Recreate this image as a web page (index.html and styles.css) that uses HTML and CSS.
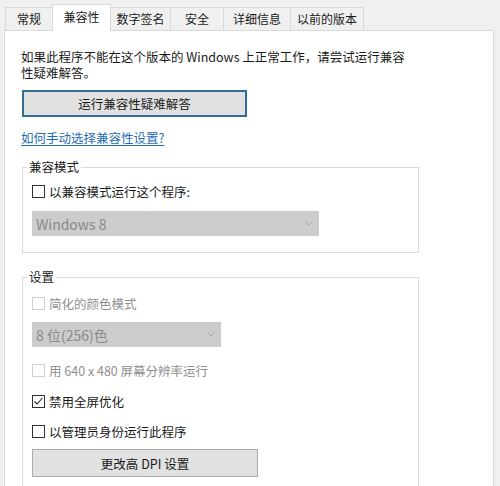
FILE: index.html
```html
<!DOCTYPE html>
<html lang="zh-CN">
<head>
<meta charset="utf-8">
<title>兼容性</title>
<link rel="stylesheet" href="styles.css">
</head>
<body>
<div class="window">
  <div class="tabs">
    <div class="tab tab-general">常规</div>
    <div class="tab tab-active">兼容性</div>
    <div class="tab tab-sign">数字签名</div>
    <div class="tab tab-security">安全</div>
    <div class="tab tab-details">详细信息</div>
    <div class="tab tab-prev">以前的版本</div>
  </div>
  <div class="panel">
    <p class="intro">如果此程序不能在这个版本的 Windows 上正常工作，请尝试运行兼容性疑难解答。</p>
    <button class="btn btn-focus">运行兼容性疑难解答</button>
    <a class="link">如何手动选择兼容性设置?</a>

    <fieldset class="group group-compat">
      <legend>兼容模式</legend>
      <div class="check check-first"><span class="box"></span><span>以兼容模式运行这个程序:</span></div>
      <div class="select select-os">
        <span>Windows 8</span>
        <svg class="chev" width="8" height="5" viewBox="0 0 8 5"><polyline points="0.5,0.5 4,4 7.5,0.5" fill="none" stroke="#a8a8a8" stroke-width="1"/></svg>
      </div>
    </fieldset>

    <fieldset class="group group-settings">
      <legend>设置</legend>
      <div class="check check-disabled check-s1"><span class="box"></span><span>简化的颜色模式</span></div>
      <div class="select select-color">
        <span>8 位(256)色</span>
        <svg class="chev" width="8" height="5" viewBox="0 0 8 5"><polyline points="0.5,0.5 4,4 7.5,0.5" fill="none" stroke="#a8a8a8" stroke-width="1"/></svg>
      </div>
      <div class="check check-disabled check-s2"><span class="box"></span><span>用 640 x 480 屏幕分辨率运行</span></div>
      <div class="check check-s3"><span class="box"><svg width="11" height="11" viewBox="0 0 11 11"><polyline points="1.5,5.5 4,8 9.5,2" fill="none" stroke="#222" stroke-width="1.1"/></svg></span><span>禁用全屏优化</span></div>
      <div class="check check-s4"><span class="box"></span><span>以管理员身份运行此程序</span></div>
      <button class="btn btn-dpi">更改高 DPI 设置</button>
    </fieldset>
  </div>
</div>
</body>
</html>
```

FILE: styles.css
```css
html, body {
  margin: 0;
  height: 100%;
}
body {
  background: #f0f0f0;
  font-family: "Noto Sans CJK SC", "Noto Sans", sans-serif;
  font-size: 12.5px;
  color: #1a1a1a;
  overflow: hidden;
}
.window {
  display: flex;
  flex-direction: column;
  height: 486px;
  padding: 0 6px 0 4px;
  box-sizing: border-box;
  overflow: hidden;
}
.tabs {
  flex: none;
  display: flex;
  align-items: flex-end;
  height: 31px;
  margin-bottom: -1px;
  padding-left: 1px;
  position: relative;
  z-index: 1;
}
.tab {
  box-sizing: border-box;
  height: 23px;
  margin-bottom: 1px;
  margin-left: -1px;
  border: 1px solid #d9d9d9;
  border-bottom: none;
  background: #f0f0f0;
  font-size: 12px;
  line-height: 22px;
  text-align: center;
  color: #1a1a1a;
}
.tab-general { width: 48px; margin-left: 0; }
.tab-active {
  width: 59px;
  height: 27px;
  margin-bottom: 0;
  background: #fff;
  line-height: 24px;
}
.tab-sign { width: 61px; }
.tab-security { width: 54px; }
.tab-details { width: 68px; }
.tab-prev { width: 74px; }

.panel {
  flex: 1;
  min-height: 0;
  overflow: hidden;
  background: #fff;
  border: 1px solid #d9d9d9;
  border-bottom: none;
  padding: 18px 0 0 16px;
  display: flex;
  flex-direction: column;
  align-items: flex-start;
}
.intro {
  flex: none;
  margin: 0;
  line-height: 16px;
  max-width: 392px;
}
.btn {
  flex: none;
  box-sizing: border-box;
  font-family: inherit;
  font-size: 12.5px;
  color: #1a1a1a;
  background: #e1e1e1;
  border: 1px solid #adadad;
  padding: 0;
}
.btn-focus {
  margin: 9px 0 0 1px;
  width: 225px;
  height: 27px;
  border: 2px solid #2f6f98;
}
.link {
  flex: none;
  margin-top: 13px;
  line-height: 16px;
  color: #1f6db2;
  text-decoration: underline;
  text-underline-offset: 2px;
}
.group {
  flex: none;
  box-sizing: border-box;
  width: 397px;
  margin: 0 0 0 1px;
  border: 1px solid #dcdcdc;
  padding: 0 9px 16px;
  min-inline-size: 0;
}
.group legend {
  padding: 0 2px;
  margin-left: -5px;
  line-height: 16px;
}
.group-compat { margin-top: 13px; }
.group-settings { margin-top: 16px; }

.check {
  display: flex;
  align-items: center;
  height: 16px;
}
.box {
  box-sizing: border-box;
  width: 13px;
  height: 13px;
  border: 1px solid #333;
  margin-right: 4px;
  display: flex;
  align-items: center;
  justify-content: center;
}
.check-disabled { color: #8f8f8f; }
.check-disabled .box { border-color: #cfcfcf; }
.check-first { margin-top: 8px; }
.check-s1 { margin-top: 10px; }
.check-s2 { margin-top: 15px; }
.check-s3 { margin-top: 15px; }
.check-s4 { margin-top: 14px; }

.select {
  box-sizing: border-box;
  height: 25px;
  background: #cccccc;
  color: #8a8a8a;
  font-size: 14px;
  display: flex;
  align-items: center;
  justify-content: space-between;
  padding: 0 6px 0 4px;
}
.select-os { width: 287px; margin-top: 12px; }
.select-color { width: 189px; margin-top: 11px; }
.chev { display: block; }

.btn-dpi {
  margin-top: 10px;
  width: 226px;
  height: 28px;
}
```
